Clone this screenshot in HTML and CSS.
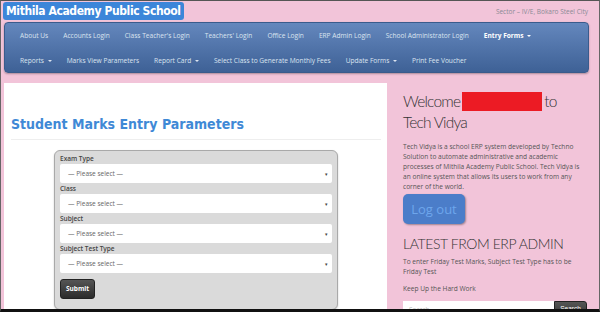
FILE: index.html
```html
<!DOCTYPE html>
<html lang="en">

<head>
  <meta charset="UTF-8">
  <meta name="viewport" content="width=device-width, initial-scale=1.0">
  <title>Student Marks Entry Parameters</title>
  <link rel="stylesheet" href="styles.css">
</head>

<body>
  <div class="page">
    <!-- 顶部标题 -->
    <header class="top">
      <h1 class="school">Mithila Academy Public School</h1>
      <span class="address">Sector &ndash; IV/E, Bokaro Steel City</span>
    </header>

    <!-- 导航栏 -->
    <nav class="navbar">
      <ul class="nav-row">
        <li>About Us</li>
        <li>Accounts Login</li>
        <li>Class Teacher's Login</li>
        <li>Teachers' Login</li>
        <li>Office Login</li>
        <li>ERP Admin Login</li>
        <li>School Administrator Login</li>
        <li class="active">Entry Forms <span class="caret"></span></li>
      </ul>
      <ul class="nav-row">
        <li>Reports <span class="caret"></span></li>
        <li>Marks View Parameters</li>
        <li>Report Card <span class="caret"></span></li>
        <li>Select Class to Generate Monthly Fees</li>
        <li>Update Forms <span class="caret"></span></li>
        <li>Print Fee Voucher</li>
      </ul>
    </nav>

    <div class="content">
      <main class="main-panel">
        <h2 class="page-title">Student Marks Entry Parameters</h2>
        <form class="param-form">
          <label>Exam Type</label>
          <div class="select"><span>&mdash; Please select &mdash;</span><span class="arrow">&#9662;</span></div>
          <label>Class</label>
          <div class="select"><span>&mdash; Please select &mdash;</span><span class="arrow">&#9662;</span></div>
          <label>Subject</label>
          <div class="select"><span>&mdash; Please select &mdash;</span><span class="arrow">&#9662;</span></div>
          <label>Subject Test Type</label>
          <div class="select"><span>&mdash; Please select &mdash;</span><span class="arrow">&#9662;</span></div>
          <button type="button" class="submit-btn">Submit</button>
        </form>
      </main>

      <aside class="sidebar">
        <h3 class="welcome">Welcome<span class="redact"></span>to<br>Tech Vidya</h3>
        <p class="about">Tech Vidya is a school ERP system developed by Techno Solution to automate administrative and academic processes of Mithila Academy Public School. Tech Vidya is an online system that allows its users to work from any corner of the world.</p>
        <button type="button" class="logout-btn">Log out</button>
        <h3 class="latest">LATEST FROM ERP ADMIN</h3>
        <p class="note">To enter Friday Test Marks, Subject Test Type has to be Friday Test</p>
        <p class="note">Keep Up the Hard Work</p>
        <div class="search">
          <div class="search-input">Search</div>
          <button type="button" class="search-btn">Search</button>
        </div>
      </aside>
    </div>
  </div>
</body>

</html>
```

FILE: styles.css
```css
* {
  box-sizing: border-box;
}

html,
body {
  margin: 0;
  height: 312px;
  overflow: hidden;
}

body {
  background: #f2c4d9;
  font-family: "Open Sans", "Liberation Sans", sans-serif;
}

.page {
  height: 312px;
  border-top: 1px solid #555;
  border-left: 1px solid #666;
  border-right: 1px solid #666;
  border-bottom: 3px solid #111;
  overflow: hidden;
}

/* 顶部 */
.top {
  display: flex;
  justify-content: space-between;
  align-items: flex-start;
  height: 21px;
  padding: 1px 11px 0 2px;
}

.school {
  margin: 0;
  background: #3c86d9;
  color: #fff;
  font-family: "DejaVu Sans Condensed", "DejaVu Sans", sans-serif;
  font-weight: bold;
  font-size: 12px;
  line-height: 18px;
  padding: 0 3px 0 3px;
  border-radius: 3px;
  letter-spacing: -0.4px;
}

.address {
  color: #8a8a95;
  font-size: 6.5px;
  padding-top: 5px;
}

/* 导航栏 */
.navbar {
  margin: 0 10px 0 3px;
  height: 51px;
  border-radius: 4px;
  border: 1px solid #3a5b8c;
  background: linear-gradient(#6487bd, #3e6196);
  box-shadow: 0 1px 2px rgba(0, 0, 0, 0.3);
}

.nav-row {
  display: flex;
  list-style: none;
  margin: 0;
  padding: 0 0 0 15px;
  height: 25px;
  align-items: center;
  gap: 15px;
}

.nav-row li {
  color: #dbe4f0;
  font-size: 6.6px;
  white-space: nowrap;
}

.nav-row li.active {
  color: #fff;
  font-weight: bold;
}

.caret {
  display: inline-block;
  border-top: 2px solid currentColor;
  border-left: 2px solid transparent;
  border-right: 2px solid transparent;
  vertical-align: middle;
  margin-left: 2px;
}

/* 内容 */
.content {
  display: flex;
  margin-top: 10px;
  gap: 16px;
}

.main-panel {
  width: 383px;
  margin-left: 3px;
  height: 240px;
  background: #fff;
  padding: 29px 6px 0 7px;
}

.page-title {
  margin: 0;
  color: #3f89d6;
  font-family: "DejaVu Sans Condensed", "DejaVu Sans", sans-serif;
  font-weight: bold;
  font-size: 14px;
  line-height: 24px;
  padding-bottom: 3px;
  border-bottom: 1px solid #eee;
}

.param-form {
  margin: 10px 0 0 43px;
  width: 284px;
  background: #dadada;
  border: 1px solid #a9a9a9;
  border-radius: 6px;
  padding: 3px 5px 10px;
  box-shadow: 0 1px 2px rgba(0, 0, 0, 0.2);
}

.param-form label {
  display: block;
  color: #444;
  font-size: 6.5px;
  line-height: 10px;
  font-weight: 600;
}

.select {
  display: flex;
  justify-content: space-between;
  align-items: center;
  height: 19px;
  background: #fff;
  border-radius: 2px;
  padding: 0 4px 0 8px;
  color: #666;
  font-size: 6.5px;
  margin-bottom: 1px;
}

.arrow {
  font-size: 5px;
  color: #444;
}

.submit-btn {
  margin-top: 3px;
  width: 35px;
  height: 20px;
  border: 1px solid #222;
  border-radius: 3px;
  background: linear-gradient(#555, #2b2b2b);
  color: #fff;
  font-family: "Open Sans", sans-serif;
  font-weight: bold;
  font-size: 6.5px;
  padding: 0;
}

/* 侧栏 */
.sidebar {
  width: 184px;
  padding-top: 8px;
  color: #444;
}

.welcome {
  margin: 0;
  font-family: "Lato", sans-serif;
  font-weight: 300;
  font-size: 15.5px;
  letter-spacing: -0.8px;
  line-height: 21px;
  color: #333;
}

.redact {
  display: inline-block;
  width: 80px;
  height: 19px;
  background: #ec1b24;
  vertical-align: -4px;
  margin-left: 2px;
  margin-right: 2px;
}

.about {
  margin: 9px 0 0;
  font-size: 6.6px;
  line-height: 10px;
  color: #555;
}

.logout-btn {
  display: block;
  margin-top: 2px;
  width: 62px;
  height: 30px;
  border: none;
  border-radius: 5px;
  background: #4b7dc9;
  color: #6ea6ec;
  font-family: "Open Sans", sans-serif;
  font-size: 13px;
  padding: 0;
  box-shadow: 1px 1px 2px rgba(0, 0, 0, 0.35);
}

.latest {
  margin: 11px 0 4px;
  font-family: "Lato", sans-serif;
  font-weight: 300;
  font-size: 14px;
  letter-spacing: -0.4px;
  line-height: 18px;
  color: #333;
}

.note {
  margin: 0 0 7px;
  font-size: 6.6px;
  line-height: 10px;
  color: #555;
}

.search {
  display: flex;
  margin-top: 2px;
  height: 20px;
}

.search-input {
  flex: 1;
  background: #fff;
  color: #bbb;
  font-size: 6.5px;
  padding: 4px 6px;
}

.search-btn {
  width: 33px;
  border: 1px solid #222;
  border-radius: 0 3px 3px 0;
  background: linear-gradient(#555, #2b2b2b);
  color: #fff;
  font-size: 6.5px;
  padding: 0 0 6px;
}
```
